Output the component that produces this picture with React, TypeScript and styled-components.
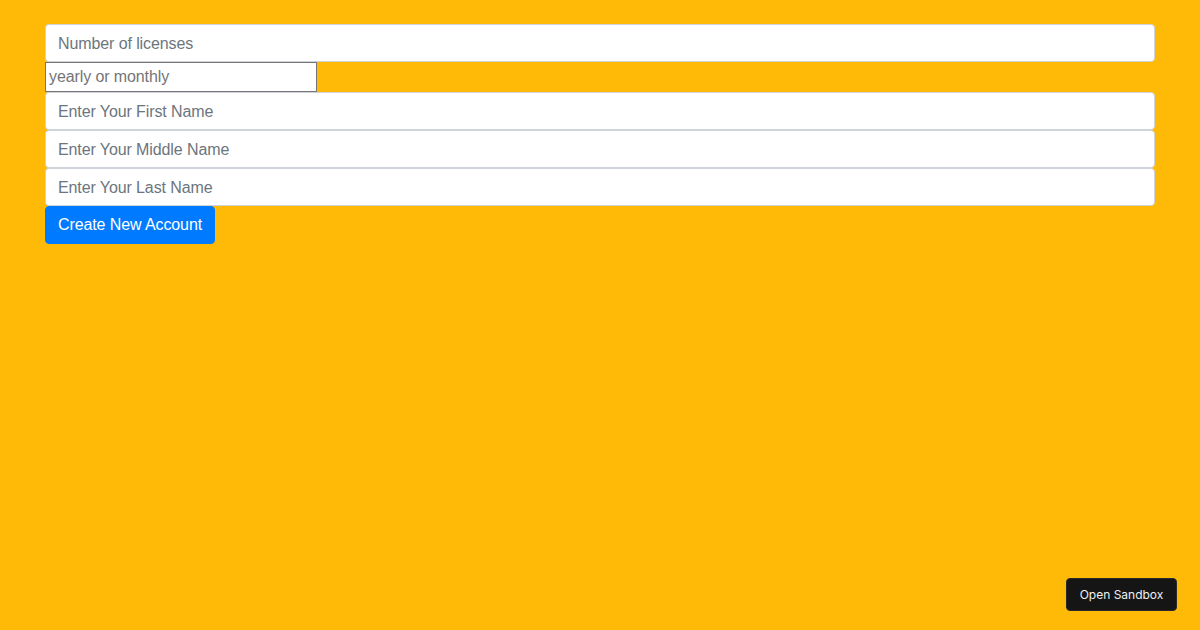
import React from "react";
import styled, { createGlobalStyle } from "styled-components";

const Global = createGlobalStyle`
  html, body { margin: 0; padding: 0; }
  body {
    background: #ffb907;
    font-family: "Liberation Sans", Arial, sans-serif;
    width: 1200px;
    height: 630px;
    overflow: hidden;
  }
  * { box-sizing: border-box; }
`;

const Page = styled.div`
  height: 630px;
  position: relative;
  padding: 24px 45px 0;
`;

const Form = styled.form`
  display: flex;
  flex-direction: column;
  align-items: flex-start;
`;

const Field = styled.input`
  display: block;
  width: 100%;
  height: 38px;
  padding: 7px 12px 5px;
  font-family: "Liberation Sans", Arial, sans-serif;
  font-size: 16px;
  letter-spacing: -0.1px;
  line-height: 1.5;
  color: #495057;
  background: #fff;
  border: 1px solid #ced4da;
  border-radius: 4px;
  &::placeholder { color: #6c757d; opacity: 1; }
`;

const Plain = styled.input`
  width: 272px;
  height: 30px;
  padding: 1px 3px;
  font-family: "Liberation Sans", Arial, sans-serif;
  font-size: 16px;
  letter-spacing: -0.1px;
  background: #fff;
  border: 1px solid #767676;
  border-radius: 0;
  &::placeholder { color: #757575; opacity: 1; }
`;

const Submit = styled.button`
  height: 38px;
  width: 170px;
  padding: 0;
  white-space: nowrap;
  font-family: "Liberation Sans", Arial, sans-serif;
  font-size: 16px;
  letter-spacing: -0.1px;
  line-height: 1.5;
  color: #fff;
  background: #007bff;
  border: 1px solid #007bff;
  border-radius: 4px;
`;

const Sandbox = styled.button`
  position: absolute;
  right: 23px;
  bottom: 19px;
  width: 111px;
  height: 33px;
  background: #151515;
  color: #f0f0f0;
  border: 1px solid #2a2a2a;
  border-radius: 4px;
  font-family: Inter, "Liberation Sans", sans-serif;
  font-size: 12px;
  padding: 0;
`;

export default function App() {
  return (
    <>
      <Global />
      <Page>
        <Form onSubmit={(e) => e.preventDefault()}>
          <Field placeholder="Number of licenses" />
          <Plain placeholder="yearly or monthly" />
          <Field placeholder="Enter Your First Name" />
          <Field placeholder="Enter Your Middle Name" />
          <Field placeholder="Enter Your Last Name" />
          <Submit type="submit">Create New Account</Submit>
        </Form>
        <Sandbox>Open Sandbox</Sandbox>
      </Page>
    </>
  );
}
